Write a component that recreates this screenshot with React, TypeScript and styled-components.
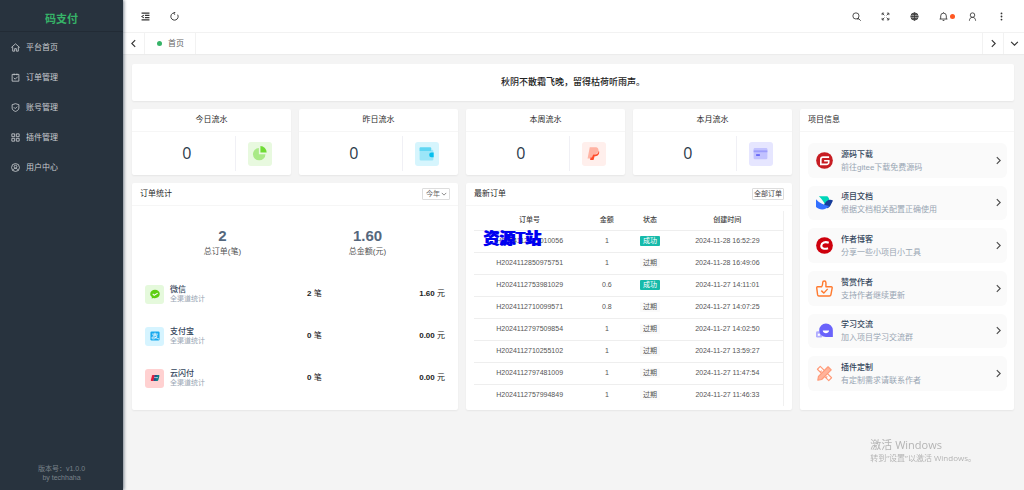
import React from "react";
import styled, { createGlobalStyle } from "styled-components";

const GlobalStyle = createGlobalStyle`
  *, *::before, *::after { box-sizing: border-box; }
  body {
    margin: 0;
    background: #f4f4f4;
    color: #4a4a4a;
    font-family: "Liberation Sans", "Noto Sans CJK SC", sans-serif;
    font-size: 8px;
    line-height: 12px;
  }
  h1, h2, h3, p, ul { margin: 0; padding: 0; font-size: inherit; font-weight: normal; }
  ul { list-style: none; }
  a { color: inherit; text-decoration: none; }
  button, select { font: inherit; color: inherit; border: 0; padding: 0; background: none; cursor: pointer; }
  svg { display: block; flex: none; }
`;

const Shell = styled.div`
  display: flex;
  min-height: 100vh;
`;

const Sidebar = styled.aside`
  display: flex;
  flex-direction: column;
  flex: none;
  width: 123px;
  background: #28333e;
  color: #c8ccd0;
  box-shadow: 1px 0 3px rgba(0, 21, 41, 0.5);
  z-index: 1;
`;

const Brand = styled.h1`
  padding-top: 7px;
  height: 32px;
  border-bottom: 1px solid #222b35;
  color: #36b368;
  font-size: 11px;
  font-weight: bold;
  line-height: 24px;
  text-align: center;
`;

const MenuLink = styled.a`
  display: flex;
  align-items: center;
  gap: 6px;
  height: 30px;
  padding-left: 11px;
  span { padding-top: 2px; }
`;

const Version = styled.footer`
  margin-top: auto;
  padding-bottom: 8px;
  color: #7a828a;
  font-size: 7px;
  line-height: 9px;
  text-align: center;
`;

const Main = styled.div`
  flex: 1;
  min-width: 0;
`;

const TopBar = styled.header`
  display: flex;
  justify-content: space-between;
  height: 33px;
  padding: 0 8px;
  background: #fff;
  border-bottom: 1px solid #f2f2f2;
  color: #333;
`;

const Tools = styled.div`
  display: flex;
`;

const ToolButton = styled.button`
  display: flex;
  align-items: center;
  justify-content: center;
  position: relative;
  width: 29px;
  height: 32px;
`;

const Badge = styled.span`
  position: absolute;
  top: 14px;
  right: 3px;
  width: 5px;
  height: 5px;
  border-radius: 50%;
  background: #ff5722;
`;

const TabBar = styled.nav`
  display: flex;
  height: 21px;
  background: #fff;
  box-shadow: 0 1px 1px rgba(0, 0, 0, 0.03);
`;

const TabArrow = styled.button<{ $side: "left" | "right" }>`
  display: flex;
  align-items: center;
  justify-content: center;
  width: ${(p) => (p.$side === "left" ? 22 : 21)}px;
  border-${(p) => (p.$side === "left" ? "right" : "left")}: 1px solid #f2f2f2;
  color: #333;
`;

const Tab = styled.a`
  display: flex;
  align-items: center;
  gap: 6px;
  margin-right: auto;
  padding: 0 11px 0 12px;
  border-right: 1px solid #f2f2f2;
  color: #666;
  &::before {
    content: "";
    width: 5px;
    height: 5px;
    border-radius: 50%;
    background: #36b368;
  }
`;

const Content = styled.main`
  display: grid;
  grid-template-columns: 660fr 214fr;
  gap: 8px;
  padding: 10px 10px 10px 9px;
`;

const Card = styled.section`
  display: flex;
  flex-direction: column;
  background: #fff;
  border-radius: 2px;
  box-shadow: 0 1px 2px rgba(0, 0, 0, 0.06);
`;

const Quote = styled(Card)`
  grid-column: 1 / -1;
  height: 37px;
  color: #222;
  font-size: 9px;
  font-weight: 500;
  line-height: 37px;
  text-align: center;
`;

const Column = styled.div`
  display: grid;
  gap: 8px;
`;

const FlowRow = styled.div`
  display: grid;
  grid-template-columns: repeat(4, 1fr);
  gap: 8px;
`;

const PanelRow = styled.div`
  display: grid;
  grid-template-columns: repeat(2, 1fr);
  gap: 8px;
`;

const CardHead = styled.header<{ $center?: boolean }>`
  display: flex;
  align-items: center;
  justify-content: ${(p) => (p.$center ? "center" : "space-between")};
  height: 23px;
  padding: 0 8px;
  border-bottom: 1px solid #f6f6f6;
  color: #2a2a2a;
`;

const FlowBody = styled.div`
  display: grid;
  grid-template-columns: 2fr 1fr;
  align-items: center;
  height: 43px;
  padding: 4px 7px;
`;

const FlowValue = styled.p`
  border-right: 1px solid #f0f0f5;
  color: #2c3a4a;
  font-family: "Open Sans", "Noto Sans", sans-serif;
  font-size: 16px;
  line-height: 35px;
  text-align: center;
`;

const Tile = styled.span<{ $bg: string; $size: number }>`
  display: flex;
  align-items: center;
  justify-content: center;
  flex: none;
  justify-self: center;
  width: ${(p) => p.$size}px;
  height: ${(p) => p.$size}px;
  border-radius: 3px;
  background: ${(p) => p.$bg};
`;

const YearPicker = styled.label`
  display: flex;
  align-items: center;
  width: 28px;
  height: 12px;
  padding-left: 3px;
  border: 1px solid #ddd;
  border-radius: 1px;
  color: #666;
  font-size: 7px;
  select {
    width: 15px;
    appearance: none;
    outline: none;
    line-height: 10px;
  }
`;

const SmallButton = styled.button`
  height: 12px;
  padding: 0 1px;
  border: 1px solid #ddd;
  border-radius: 1px;
  color: #444;
  font-size: 7px;
  line-height: 10px;
`;

const Totals = styled.div`
  display: grid;
  grid-template-columns: 1fr 1fr;
  padding: 21px 18px 0;
  text-align: center;
`;

const TotalValue = styled.p`
  color: #55677d;
  font-size: 15px;
  font-weight: bold;
  line-height: 18px;
`;

const TotalLabel = styled.p`
  color: #555;
  line-height: 14px;
`;

const Channels = styled.ul`
  padding: 14px 13px 10px;
`;

const Channel = styled.li`
  display: grid;
  grid-template-columns: 54% 1fr auto;
  align-items: center;
  height: 42px;
  color: #222;
`;

const ChannelName = styled.div`
  display: flex;
  align-items: center;
  gap: 6px;
`;

const Name = styled.h3`
  color: #34465c;
  font-size: 8px;
  font-weight: 500;
  line-height: 9px;
`;

const Hint = styled.p`
  color: #98a5b3;
  font-size: 7px;
  line-height: 9px;
`;

const TableWrap = styled.div`
  position: relative;
  margin: 5px 8px 4px;
  border-right: 1px solid #f0f0f0;
`;

const OrderTable = styled.table`
  width: 100%;
  border-collapse: collapse;
  table-layout: fixed;
  color: #555;
  font-size: 7px;
  line-height: 10px;
  text-align: center;
  th { height: 19px; padding: 0; font-weight: 500; color: #444; }
  td { height: 22px; padding: 0; border-top: 1px solid #eee; }
  th:nth-child(odd) { width: 14%; }
  th:first-child { width: 36%; }
  th:nth-child(2) { width: 14%; }
  th:last-child { width: 36%; }
`;

const Status = styled.span<{ $ok: boolean }>`
  display: inline-block;
  width: 20px;
  border-radius: 1px;
  background: ${(p) => (p.$ok ? "#16baaa" : "#fafafa")};
  color: ${(p) => (p.$ok ? "#fff" : "#555")};
`;

const SiteMark = styled.strong`
  position: absolute;
  top: 18px;
  left: 9px;
  color: #0000f0;
  font-size: 16px;
  font-weight: 900;
  line-height: 20px;
  text-shadow: 1px 0 #0000f0;
  white-space: nowrap;
`;

const LinkList = styled.ul`
  display: grid;
  flex: 1;
  grid-auto-rows: 1fr;
  gap: 8px;
  padding: 11px 7px 19px 8px;
`;

const LinkItem = styled.a`
  display: flex;
  align-items: center;
  gap: 8px;
  height: 100%;
  padding: 0 4px 0 8px;
  border-radius: 6px;
  background: #fafafa;
`;

const LinkText = styled.div`
  flex: 1;
  padding-top: 1px;
  h3, p { line-height: 13px; }
  p { font-size: 8px; }
`;

const Activation = styled.aside`
  position: fixed;
  right: 48px;
  bottom: 27px;
  color: #b4b4b4;
  font-family: "Open Sans", "Noto Sans CJK SC", sans-serif;
  pointer-events: none;
  h2 { font-size: 11px; line-height: 14px; }
  p { font-size: 8px; line-height: 11px; }
`;

type IconProps = { size?: number; children: React.ReactNode; box?: number; width?: number };

const Line = ({ size = 9, box = 16, width = 1.5, children }: IconProps) => (
  <svg width={size} height={size} viewBox={`0 0 ${box} ${box}`} fill="none" stroke="currentColor" strokeWidth={width} aria-hidden="true">
    {children}
  </svg>
);

const Solid = ({ size = 15, box = 24, children }: IconProps) => (
  <svg width={size} height={size} viewBox={`0 0 ${box} ${box}`} aria-hidden="true">
    {children}
  </svg>
);

const Chevron = ({ d, size = 9 }: { d: string; size?: number }) => (
  <Line size={size} width={2}><path d={d} /></Line>
);
const LEFT = "M11 2 5 8l6 6";
const RIGHT = "M5 2l6 6-6 6";
const DOWN = "M2 5l6 6 6-6";

const menu = [
  { label: "平台首页", icon: <path d="M.5 8 8 1.500 15.500 8M3 7v7.500h3.500V10h3v4.500H13V7" /> },
  { label: "订单管理", icon: <path d="M2 2.500h12v12H2zM5.500 1v3M10.500 1v3M5 8.500l2.500 2.500L12 6.500" /> },
  { label: "账号管理", icon: <path d="M8 1.200 14 3v6c0 3-3 5-6 6-3-1-6-3-6-6V3zM5 7.500l2.500 2.500L11 6.500" /> },
  { label: "插件管理", icon: <path d="M1.500 1.500h5v5h-5zM9.500 1.500h5v5h-5zM1.500 9.500h5v5h-5zM9.500 9.500h5v5h-5z" /> },
  { label: "用户中心", icon: <><circle cx="8" cy="8" r="7" /><circle cx="8" cy="6.500" r="2.500" /><path d="M3.500 13c.8-2.500 2.500-3.500 4.500-3.500s3.700 1 4.500 3.500" /></> },
];

const tools = [
  { label: "搜索", icon: <><circle cx="7" cy="7" r="5.500" /><path d="M11 11l4.500 4.500M9 12.500h3" /></> },
  { label: "全屏", icon: <path d="M2 5.500V2h3.500M10.500 2H14v3.500M14 10.500V14h-3.500M5.500 14H2v-3.500M2.500 2.500 6 6M13.500 2.500 10 6M13.500 13.500 10 10M2.500 13.500 6 10" /> },
  { label: "语言", icon: <><circle cx="8" cy="8" r="6.500" /><ellipse cx="8" cy="8" rx="3" ry="6.500" /><path d="M1.500 8h13M8 1.500v13M2.500 4.800h11M2.500 11.200h11" /></> },
  { label: "消息", dot: true, icon: <path d="M1 12.500h14M3 12.500V7a5 5 0 0 1 10 0v5.500M8 2V.5M6.500 15h3" /> },
  { label: "用户", icon: <><circle cx="8" cy="5.500" r="4" /><path d="M2.500 15.500c0-3.500 2-6 5.500-6s5.500 2.500 5.500 6" /></> },
  { label: "更多", icon: <g fill="currentColor" stroke="none"><circle cx="8" cy="2.500" r="1.600" /><circle cx="8" cy="8" r="1.600" /><circle cx="8" cy="13.500" r="1.600" /></g> },
];

const flows = [
  { label: "今日流水", bg: "#e8f9df", icon: <><path d="M11 3v10h10.500A10 10 0 1 1 11 3z" fill="#a9ea86" /><path d="M13.500 0A10.500 10.500 0 0 1 23.500 10.500h-10z" fill="#6fdc34" /></> },
  { label: "昨日流水", bg: "#d6f5fd", icon: <><path d="M1 3h18v3h2a2 2 0 0 1 2 2v13a2 2 0 0 1-2 2H3a2 2 0 0 1-2-2z" fill="#9be6f8" /><path d="M2 2h16a1.500 1.500 0 0 1 1.500 1.500V8H1V3a1 1 0 0 1 1-1z" fill="#5fd6f3" /><path d="M23.500 10.500H20a3.700 3.700 0 0 0 0 7.500h3.500z" fill="#06bfee" /></> },
  { label: "本周流水", bg: "#ffefec", icon: <><path d="M6 2h9c4 0 6 3 4.500 7-1 3-4 4.500-7 4.500h-2L9 20H2.500z" fill="#ffb3a3" /><path d="M20.500 7c1.200 2.500.8 5.500-1.500 7.800-1.500 1.300-3.200 1.700-5.200 1.700L12 22.500H6.500l.8-4H9.500l1.500-5h3.500c3.500-.3 5.500-2.500 6-6.500z" fill="#ff4c2b" /></> },
  { label: "本月流水", bg: "#e6e6ff", icon: <><rect x="1" y="3" width="22" height="18" rx="2" fill="#c2c2ff" /><path d="M1 7h22v3H1z" fill="#9d9dfb" /><path d="M5 13h6v3H5z" fill="#6a6af8" /></> },
];

const channels = [
  { name: "微信", count: 2, amount: "1.60", bg: "#e5f9dc", icon: <><path d="M12 2c6.500 0 11.500 4.500 11.500 10S18.500 22 12 22c-1.500 0-3-.2-4-.6L4 23l.5-4C2 17.300.5 15 .5 12 .5 6.500 5.500 2 12 2z" fill="#5fce12" /><path d="M6.500 11.500 10 15l8.500-5" fill="none" stroke="#fff" strokeWidth="2.500" /></> },
  { name: "支付宝", count: 0, amount: "0.00", bg: "#d6f4ff", icon: <><rect x="1" y="1" width="22" height="22" rx="3" fill="#18a9ee" /><path d="M5 7.500h14M12 4v7M7 11.500h10c-1 4-5 7.500-9 7.500-5 0-4.500-4.500-1-4.500 5 0 10 3 15 5" fill="none" stroke="#fff" strokeWidth="2" /></> },
  { name: "云闪付", count: 0, amount: "0.00", bg: "#ffd1d1", icon: <><path d="M6 5h6L8.500 19H3Q1.500 19 2 17L5 6z" fill="#e11d3c" /><path d="M11 5h7l-4 14H8z" fill="#27518c" /><path d="M17 5h4q2 0 1.500 2L20 17q-.5 2-2 2h-5z" fill="#0b8087" /><path d="M10 11h9" stroke="#fff" strokeWidth="1.500" /></> },
];

const orders: [string, string, boolean, string][] = [
  ["H2024112801010056", "1", true, "2024-11-28 16:52:29"],
  ["H2024112850975751", "1", false, "2024-11-28 16:49:06"],
  ["H2024112753981029", "0.6", true, "2024-11-27 14:11:01"],
  ["H2024112710099571", "0.8", false, "2024-11-27 14:07:25"],
  ["H2024112797509854", "1", false, "2024-11-27 14:02:50"],
  ["H2024112710255102", "1", false, "2024-11-27 13:59:27"],
  ["H2024112797481009", "1", false, "2024-11-27 11:47:54"],
  ["H2024112757994849", "1", false, "2024-11-27 11:46:33"],
];

const links = [
  { name: "源码下载", hint: "前往gitee下载免费源码", icon: <><circle cx="12" cy="12" r="11.800" fill="#c71d23" /><path d="M18.500 7.200H10A3.200 3.200 0 0 0 6.800 10.400v7h8.200a3 3 0 0 0 3-3v-2h-6.500" fill="none" stroke="#fff" strokeWidth="2.300" /></> },
  { name: "项目文档", hint: "根据文档相关配置正确使用", icon: <><path d="M4 3h12c2 2 3 4.500 3.500 7l-7 4.500C10.500 10 7.500 6 4 3z" fill="#00d6b9" /><path d="M24 9c-5-2-9 0-12 5l-2 4 6 2c3-1 4.500-3.500 5.500-6z" fill="#163c9a" /><path d="M0 7.500c4.500 5 10 8 18.500 9.500C14 23 5 23 0 18.500z" fill="#3370ff" /></> },
  { name: "作者博客", hint: "分享一些小项目小工具", icon: <><circle cx="12" cy="12" r="11.800" fill="#ce000d" /><path d="M18 8c-5-1.800-10-.5-10.500 4-.4 4.500 4.500 5.500 9.500 3.800" fill="none" stroke="#fff" strokeWidth="3" /></> },
  { name: "赞赏作者", hint: "支持作者继续更新", icon: <g fill="none" stroke="#ff7a2f" strokeWidth="2" strokeLinejoin="round"><path d="M2 9.500h6c1.500-1.500 1.500-4 1.500-6C9.500 1 14 .5 14 4v5.500h7.500c1 0 1.500 1 1.300 2L21 21c-.2 1-1 1.500-2 1.500H4c-1 0-1.500-.5-1.700-1.500L1 11c0-1 .3-1.500 1-1.500z" /><path d="m7.500 15 3.500 3.500 5.500-6" /></g> },
  { name: "学习交流", hint: "加入项目学习交流群", icon: <><rect x="0" y="13" width="9" height="9" rx="2" fill="#b1adff" /><path d="M14 2a9.800 9.800 0 0 1 9.800 10v9H14A9.500 9.500 0 0 1 14 2z" fill="#6a63fb" /><path d="M9.500 12h9c-.5 5-8.500 5-9 0z" fill="#fff" /><path d="M2.500 16.500h3v3h-3z" fill="#fff" /></> },
  { name: "插件定制", hint: "有定制需求请联系作者", icon: <g stroke="#ff9a78" strokeWidth="1.600" fill="#ffd9cc" strokeLinejoin="round"><path d="m2 6 4-4 16 16-4 4z" fill="#fff" /><path d="m6 10 2-2m1 5 2-2m3 7 2-2" /><path d="m17 2.500 4.500 4.500L8 20.500l-5.500 1 1-5.500z" fill="#ffb39a" /></g> },
];

export default function App() {
  return (
    <Shell>
      <GlobalStyle />
      <Sidebar>
        <Brand>码支付</Brand>
        <nav>
          {menu.map((m) => (
            <MenuLink key={m.label} href="#">
              <Line>{m.icon}</Line>
              <span>{m.label}</span>
            </MenuLink>
          ))}
        </nav>
        <Version>
          <p>版本号：v1.0.0</p>
          <p>by techhaha</p>
        </Version>
      </Sidebar>
      <Main>
        <TopBar>
          <Tools>
            <ToolButton aria-label="收起菜单">
              <Line width={2}><path d="M1 2h14M7 6h8M7 10h8M1 14h14M5 5.500 1.500 8 5 10.500" /></Line>
            </ToolButton>
            <ToolButton aria-label="刷新">
              <Line><path d="M10 1.800A6.500 6.500 0 1 0 14.500 8M10 5.500V1.800h4" transform="rotate(-30 8 8)" /></Line>
            </ToolButton>
          </Tools>
          <Tools>
            {tools.map((t) => (
              <ToolButton key={t.label} aria-label={t.label}>
                <Line>{t.icon}</Line>
                {t.dot && <Badge />}
              </ToolButton>
            ))}
          </Tools>
        </TopBar>
        <TabBar>
          <TabArrow $side="left" aria-label="向左"><Chevron d={LEFT} /></TabArrow>
          <Tab href="#">首页</Tab>
          <TabArrow $side="right" aria-label="向右"><Chevron d={RIGHT} /></TabArrow>
          <TabArrow $side="right" aria-label="标签操作"><Chevron d={DOWN} /></TabArrow>
        </TabBar>
        <Content>
          <Quote>秋阴不散霜飞晚，留得枯荷听雨声。</Quote>
          <Column>
            <FlowRow>
              {flows.map((f) => (
                <Card key={f.label}>
                  <CardHead $center><h2>{f.label}</h2></CardHead>
                  <FlowBody>
                    <FlowValue>0</FlowValue>
                    <Tile $bg={f.bg} $size={24}><Solid>{f.icon}</Solid></Tile>
                  </FlowBody>
                </Card>
              ))}
            </FlowRow>
            <PanelRow>
              <Card>
                <CardHead>
                  <h2>订单统计</h2>
                  <YearPicker>
                    <select aria-label="统计范围"><option>今年</option></select>
                    <Chevron d={DOWN} size={6} />
                  </YearPicker>
                </CardHead>
                <Totals>
                  <div><TotalValue>2</TotalValue><TotalLabel>总订单(笔)</TotalLabel></div>
                  <div><TotalValue>1.60</TotalValue><TotalLabel>总金额(元)</TotalLabel></div>
                </Totals>
                <Channels>
                  {channels.map((c) => (
                    <Channel key={c.name}>
                      <ChannelName>
                        <Tile $bg={c.bg} $size={19}><Solid size={10}>{c.icon}</Solid></Tile>
                        <div><Name>{c.name}</Name><Hint>全渠道统计</Hint></div>
                      </ChannelName>
                      <span><b>{c.count}</b> 笔</span>
                      <span><b>{c.amount}</b> 元</span>
                    </Channel>
                  ))}
                </Channels>
              </Card>
              <Card>
                <CardHead>
                  <h2>最新订单</h2>
                  <SmallButton>全部订单</SmallButton>
                </CardHead>
                <TableWrap>
                  <OrderTable>
                    <thead>
                      <tr><th>订单号</th><th>金额</th><th>状态</th><th>创建时间</th></tr>
                    </thead>
                    <tbody>
                      {orders.map(([id, amount, ok, time]) => (
                        <tr key={id}>
                          <td>{id}</td>
                          <td>{amount}</td>
                          <td><Status $ok={ok}>{ok ? "成功" : "过期"}</Status></td>
                          <td>{time}</td>
                        </tr>
                      ))}
                    </tbody>
                  </OrderTable>
                  <SiteMark>资源T站</SiteMark>
                </TableWrap>
              </Card>
            </PanelRow>
          </Column>
          <Card>
            <CardHead><h2>项目信息</h2></CardHead>
            <LinkList>
              {links.map((l) => (
                <li key={l.name}>
                  <LinkItem href="#">
                    <Solid size={17}>{l.icon}</Solid>
                    <LinkText><Name>{l.name}</Name><Hint>{l.hint}</Hint></LinkText>
                    <Chevron d={RIGHT} />
                  </LinkItem>
                </li>
              ))}
            </LinkList>
          </Card>
        </Content>
      </Main>
      <Activation>
        <h2>激活 Windows</h2>
        <p>转到“设置”以激活 Windows。</p>
      </Activation>
    </Shell>
  );
}
